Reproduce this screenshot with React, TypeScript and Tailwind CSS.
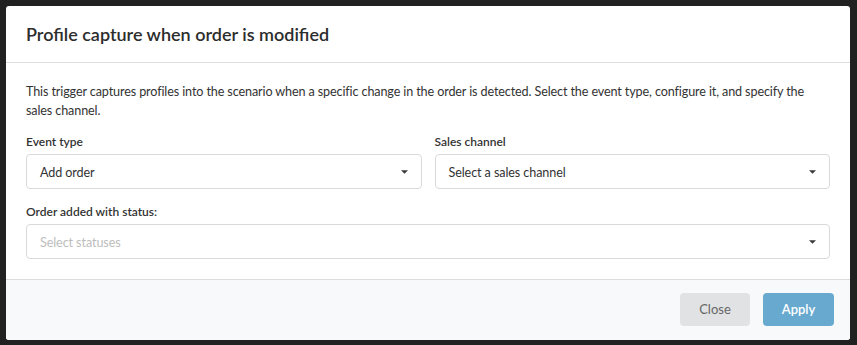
import React from 'react';

const Caret = () => (
  <svg width="7" height="4" viewBox="0 0 7 4" className="shrink-0">
    <path d="M0 0.3 L7 0.3 L3.5 3.8 Z" fill="#3a3a3a" />
  </svg>
);

const Select = ({ value, placeholder }: { value?: string; placeholder?: string }) => (
  <div className="flex h-[35px] items-center justify-between rounded-[4px] border border-[#d9d9d9] bg-white pl-[13px] pr-[13px]">
    {value ? (
      <span className="pt-[3px] text-[12.6px] tracking-[-0.1px] text-[#333]">{value}</span>
    ) : (
      <span className="pt-[3px] text-[12.6px] tracking-[-0.1px] text-[#bdbdbd]">{placeholder}</span>
    )}
    <Caret />
  </div>
);

const Field = ({ label, children }: { label: string; children: React.ReactNode }) => (
  <div className="flex flex-col">
    <label className="mb-[3px] text-[12px] leading-[18px] font-semibold text-[#333]">{label}</label>
    {children}
  </div>
);

export default function App() {
  return (
    <div
      className="flex h-[345px] w-[857px] bg-[#212121] p-[6px] pr-[7px] pb-[5px]"
      style={{ fontFamily: 'Lato, "Noto Sans", sans-serif' }}
    >
      <div className="flex flex-1 flex-col overflow-hidden rounded-[3px] bg-white">
        {/* Header */}
        <div className="flex h-[57px] items-center border-b border-[#dedede] px-5">
          <h2 className="text-[18px] font-semibold text-[#2d2d2d]">Profile capture when order is modified</h2>
        </div>

        {/* Body */}
        <div className="flex flex-1 flex-col px-5 pt-[19px]">
          <p className="mb-[13px] text-[12.6px] leading-[19px] tracking-[-0.12px] text-[#333]">
            This trigger captures profiles into the scenario when a specific change in the order is detected. Select the event type, configure it, and specify the sales channel.
          </p>
          <div className="grid grid-cols-2 gap-[13px]">
            <Field label="Event type">
              <Select value="Add order" />
            </Field>
            <Field label="Sales channel">
              <Select value="Select a sales channel" />
            </Field>
          </div>
          <div className="mt-[14px]">
            <Field label="Order added with status:">
              <Select placeholder="Select statuses" />
            </Field>
          </div>
        </div>

        {/* Footer */}
        <div className="flex h-[61px] items-center justify-end gap-[13px] border-t border-[#dcdcdc] bg-[#f8f9fa] pr-[16px] pb-[1px]">
          <button className="h-[33px] w-[70px] rounded-[4px] bg-[#e1e2e4] text-[13px] text-[#666]">Close</button>
          <button className="h-[33px] w-[71px] rounded-[4px] bg-[#67a9cf] text-[13px] font-semibold text-white">Apply</button>
        </div>
      </div>
    </div>
  );
}
